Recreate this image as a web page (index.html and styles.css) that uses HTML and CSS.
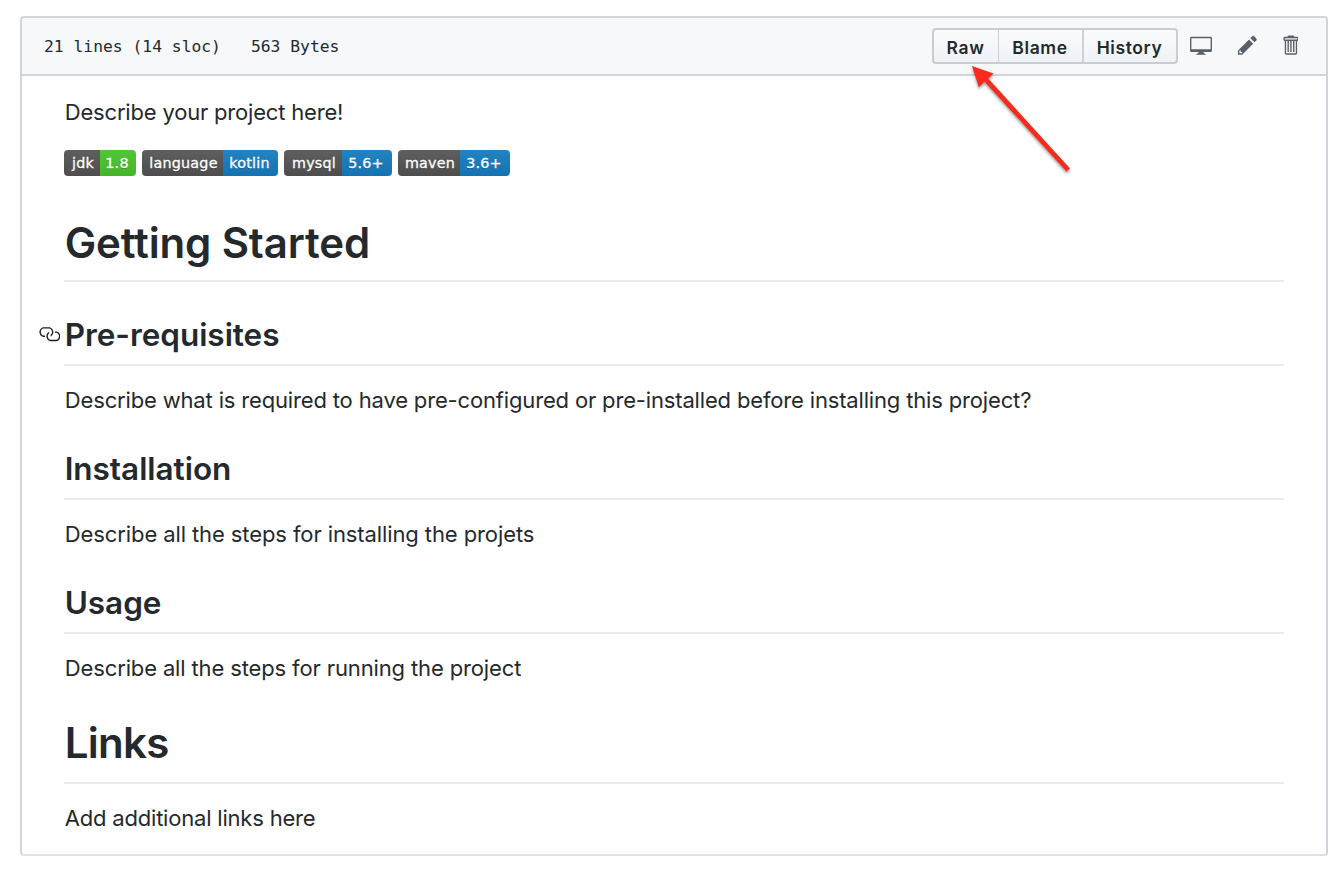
FILE: index.html
```html
<!DOCTYPE html>
<html lang="en">
<head>
<meta charset="utf-8">
<title>README.md</title>
<link rel="stylesheet" href="styles.css">
</head>
<body>
<div class="file">
  <div class="file-header">
    <div class="file-info"><span>21 lines (14 sloc)</span><span>563 Bytes</span></div>
    <div class="file-actions">
      <div class="btn-group">
        <a class="btn btn-raw">Raw</a>
        <a class="btn btn-blame">Blame</a>
        <a class="btn btn-history">History</a>
      </div>
      <svg class="icon icon-desktop" viewBox="0 0 16 16"><path d="M15 2H1c-.55 0-1 .45-1 1v9c0 .55.45 1 1 1h5.34c-.25.61-.86 1.39-2.34 2h8c-1.48-.61-2.09-1.39-2.34-2H15c.55 0 1-.45 1-1V3c0-.55-.45-1-1-1zm0 9H1V3h14v8z"/></svg>
      <svg class="icon icon-pencil" viewBox="0 0 14 16"><path d="M0 12v3h3l8-8-3-3-8 8zm3 2H1v-2h1v1h1v1zm10.3-9.3L12 6 9 3l1.3-1.3a.996.996 0 0 1 1.41 0l1.59 1.59c.39.39.39 1.02 0 1.41z"/></svg>
      <svg class="icon icon-trash" viewBox="0 0 12 16"><path fill-rule="evenodd" d="M11 2H9c0-.55-.45-1-1-1H5c-.55 0-1 .45-1 1H2c-.55 0-1 .45-1 1v1c0 .55.45 1 1 1v9c0 .55.45 1 1 1h7c.55 0 1-.45 1-1V5c.55 0 1-.45 1-1V3c0-.55-.45-1-1-1zm-1 12H3V5h1v8h1V5h1v8h1V5h1v8h1V5h1v9zm1-10H2V3h9v1z"/></svg>
    </div>
  </div>
  <div class="readme">
    <p class="intro">Describe your project here!</p>
    <div class="badges">
      <span class="badge"><span class="key jdk">jdk</span><span class="val green v-jdk">1.8</span></span>
      <span class="badge"><span class="key language">language</span><span class="val v-language">kotlin</span></span>
      <span class="badge"><span class="key mysql">mysql</span><span class="val v-mysql">5.6+</span></span>
      <span class="badge"><span class="key maven">maven</span><span class="val v-maven">3.6+</span></span>
    </div>
    <h1 class="getting">Getting Started</h1>
    <h2 class="linked"><svg class="anchor" viewBox="0 0 16 16"><path fill-rule="evenodd" d="M4 9h1v1H4c-1.5 0-3-1.69-3-3.5S2.55 3 4 3h4c1.45 0 3 1.69 3 3.5 0 1.41-.91 2.72-2 3.25V8.59c.58-.45 1-1.27 1-2.09C10 5.28 8.98 4 8 4H4c-.98 0-2 1.22-2 2.5S3 9 4 9zm9-3h-1v1h1c1 0 2 1.22 2 2.5S13.98 12 13 12H9c-.98 0-2-1.22-2-2.5 0-.83.42-1.64 1-2.09V6.25c-1.09.53-2 1.84-2 3.25C6 11.31 7.55 13 9 13h4c1.45 0 3-1.69 3-3.5S14.5 6 13 6z"/></svg>Pre-requisites</h2>
    <p>Describe what is required to have pre-configured or pre-installed before installing this project?</p>
    <h2>Installation</h2>
    <p class="install">Describe all the steps for installing the projets</p>
    <h2>Usage</h2>
    <p class="usage">Describe all the steps for running the project</p>
    <h1 class="links">Links</h1>
    <p class="more">Add additional links here</p>
  </div>
</div>
<svg class="arrow" viewBox="0 0 120 130"><path d="M12 6 33.5 13.5 28.2 18.4 110 108.5 106.5 111.5 24.6 21.8 18.8 27.2Z"/></svg>
</body>
</html>
```
FILE: styles.css
```css
* { box-sizing: border-box; }
body {
  margin: 0;
  padding: 16px 12px 14px 20px;
  background: #fff;
  color: #24292e;
  font-family: Inter, "Liberation Sans", sans-serif;
}
.file {
  height: 840px;
  border: 2px solid #d1d5da;
  border-bottom-color: #dfe2e5;
  border-radius: 4px;
}
.file-header {
  display: flex;
  justify-content: space-between;
  height: 58px;
  padding: 10px 28px 0 22px;
  background: #f6f8fa;
  border-bottom: 2px solid #d1d5da;
  border-radius: 2px 2px 0 0;
}
.file-info {
  display: flex;
  gap: 30px;
  font: 16.33px/38px "DejaVu Sans Mono", monospace;
}
.file-actions { display: flex; }
.btn-group {
  display: flex;
  width: 246px;
  height: 36px;
  margin-right: 12px;
  border: 2px solid #c9ccd0;
  border-radius: 4px;
  background: linear-gradient(#fafbfc, #eff3f6);
}
.btn {
  font-size: 17.5px;
  font-weight: 600;
  letter-spacing: .6px;
  line-height: 35px;
  text-align: center;
}
.btn-raw { width: 64px; }
.btn-blame { width: 84px; border-left: 1px solid #cdd0d4; }
.btn-history { flex: 1; border-left: 2px solid #cdd0d4; }
.icon { height: 22px; margin-top: 6px; fill: #586069; }
.icon-desktop { width: 22px; margin-right: 26px; }
.icon-pencil { width: 19.25px; margin-right: 24.75px; }
.icon-trash { width: 16.5px; }
.readme { padding: 20px 42px 0; }
p {
  margin: 18px 0 0;
  font-size: 22px;
  letter-spacing: -.16px;
  line-height: 32px;
  text-indent: .8px;
}
p.intro { margin-top: 0; letter-spacing: -.19px; }
p.install { letter-spacing: -.1px; }
p.usage { letter-spacing: -.135px; }
p.more { letter-spacing: -.2px; }
h1, h2 {
  margin: 32px 0 0;
  border-bottom: 2px solid #eaecef;
  font-weight: 600;
  text-indent: .7px;
  white-space: nowrap;
}
h1 { padding-bottom: 10px; font-size: 42px; letter-spacing: -.15px; line-height: 54px; }
h2 { padding: 1px 0 9px; font-size: 31.5px; letter-spacing: -.04px; line-height: 40px; }
.getting { margin-top: 40px; }
.links { margin-top: 32px; padding-bottom: 12px; letter-spacing: -.7px; }
.linked { display: flex; }
.anchor { width: 22.4px; height: 22.4px; margin: 8px 4px 0 -26.4px; fill: #1b1f23; }
.badges { display: flex; gap: 6px; margin-top: 22px; }
.badge {
  display: flex;
  height: 26px;
  overflow: hidden;
  border-radius: 4px;
  color: #fff;
  font: 14.3px/26px "DejaVu Sans", sans-serif;
  letter-spacing: .22px;
  text-align: center;
  text-shadow: 0 1.3px 0 rgba(1, 1, 1, .3);
  -webkit-text-stroke: .3px #fff;
}
.key { padding-left: 2px; background: linear-gradient(#5f5f5f, #4d4d4d); }
.val { padding-right: 2px; background: linear-gradient(#2284c3, #1572b0); }
.green { background: linear-gradient(#52c636, #44b528); }
.jdk, .v-jdk { width: 36px; }
.language { width: 81px; }
.v-language { width: 55px; }
.mysql { width: 58px; }
.v-mysql, .v-maven { width: 50px; }
.maven { width: 62px; }
.arrow {
  position: absolute;
  left: 960px;
  top: 60px;
  width: 120px;
  height: 130px;
  fill: #fc2a1c;
  filter: drop-shadow(0 2px 1.5px rgba(0, 0, 0, .4));
}
```
